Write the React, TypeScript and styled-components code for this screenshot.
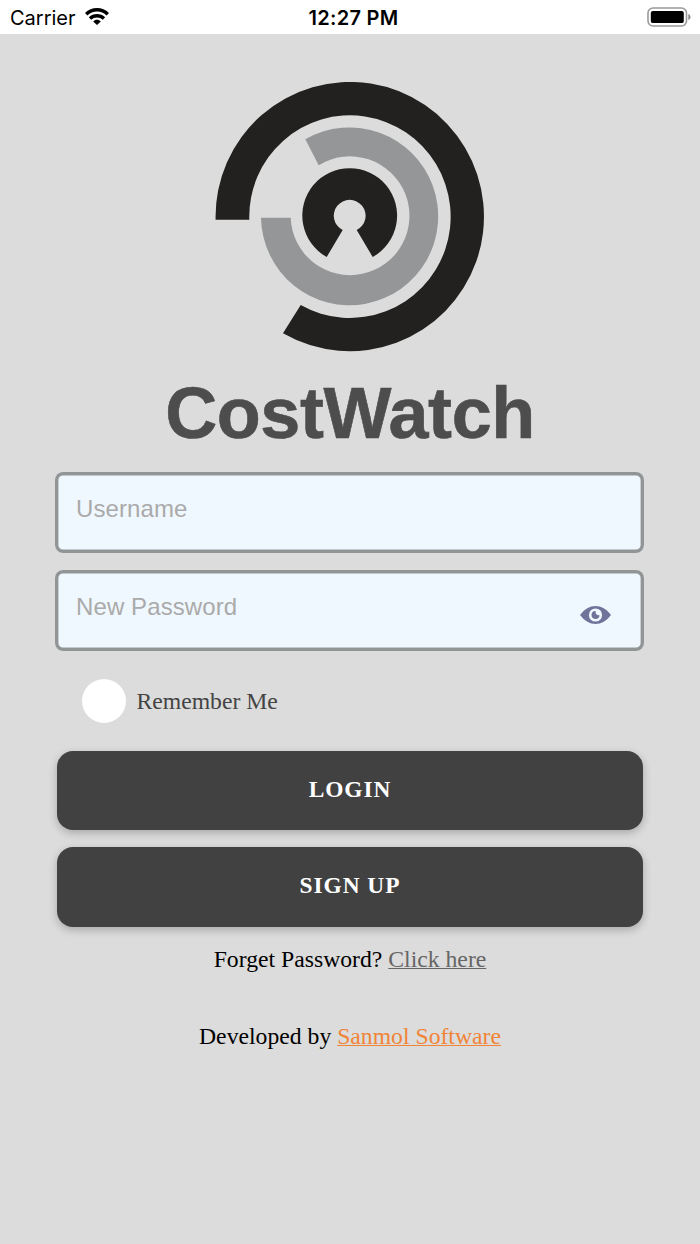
import React from "react";
import styled, { createGlobalStyle } from "styled-components";

const sans = `"Liberation Sans", Arial, sans-serif`;
const serif = `"Liberation Serif", "Times New Roman", serif`;

const GlobalStyle = createGlobalStyle`
  *, *::before, *::after { box-sizing: border-box; }
  body { margin: 0; background: #dcdcdc; }
`;

const Screen = styled.div`
  width: 700px;
  min-height: 1244px;
  display: flex;
  flex-direction: column;
  background: #dcdcdc;
  font-family: ${serif};
`;

const StatusBar = styled.header`
  height: 34px;
  padding: 0 9px 0 10px;
  display: grid;
  grid-template-columns: 1fr auto 1fr;
  align-items: center;
  background: #fff;
  color: #000;
  font-family: Inter, sans-serif;
  font-size: 20px;
`;

const Carrier = styled.div`
  display: flex;
  align-items: center;
  gap: 9px;
`;

const Label = styled.span`
  padding-top: 2px;
  line-height: 32px;
`;

const Clock = styled.time`
  padding-top: 2px;
  padding-left: 6px;
  font-weight: 600;
  line-height: 32px;
  letter-spacing: 0.3px;
`;

const Battery = styled.svg`
  justify-self: end;
  margin-bottom: 1px;
`;

const Main = styled.main`
  padding: 48px 55px 0;
  display: flex;
  flex-direction: column;
  align-items: center;
`;

const Title = styled.h1`
  margin: 21px 0 0;
  height: 80px;
  color: #4d4d4d;
  font: bold 72px/80px ${sans};
  letter-spacing: -0.4px;
  -webkit-text-stroke: 0.6px #4d4d4d;
`;

const Fields = styled.div`
  width: 589px;
  margin: 19px 1px 0 0;
  display: grid;
  gap: 17px;
`;

const Field = styled.label`
  height: 81px;
  padding: 0 33px 0 21px;
  display: flex;
  align-items: center;
  justify-content: space-between;
  border-radius: 8px;
  background: #f0f8ff;
  box-shadow: inset 0 0 0 3.4px #919596;
`;

const Placeholder = styled.span`
  padding-bottom: 8px;
  color: #aaa;
  font: 24px/28px ${sans};
  letter-spacing: 0.1px;
`;

const EyeIcon = styled.svg`
  margin-top: 8px;
`;

const Remember = styled.label`
  align-self: flex-start;
  margin: 28px 0 0 27.4px;
  display: flex;
  align-items: center;
  gap: 10px;
  color: #444;
  font-size: 23.7px;
`;

const Check = styled.span`
  width: 44px;
  height: 44px;
  border-radius: 50%;
  background: #fff;
`;

const Actions = styled.div`
  width: 586px;
  margin-top: 28px;
  display: grid;
  gap: 17px;
`;

const Button = styled.button`
  height: 79.3px;
  padding: 0 0 4px;
  border: 0;
  border-radius: 16px;
  background: #414141;
  color: #fff;
  font: bold 23.4px/28px ${serif};
  letter-spacing: 0.95px;
  box-shadow: 0 3px 8px rgba(0, 0, 0, 0.24);
`;

const Line = styled.p<{ $top: number }>`
  margin: ${(p) => p.$top}px 0 0;
  color: #000;
  font-size: 23.7px;
  line-height: 28px;
`;

const Link = styled.a<{ $color: string }>`
  color: ${(p) => p.$color};
  text-decoration: underline;
  text-decoration-thickness: 1.4px;
  text-decoration-skip-ink: none;
`;

const Logo = () => (
  <svg width="270" height="270" viewBox="215 82 270 270" aria-label="CostWatch logo">
    <path
      fill="#22211f"
      d="M215.6 219.8A134.2 134.6 0 1 1 283 333.3L300.7 305A100.7 101.3 0 1 0 249.3 219.8Z"
    />
    <path
      fill="#949697"
      d="M305.3 139.3A88.6 88.9 0 1 1 261 217.7H290.7A59.4 59.4 0 1 0 318.7 165.3Z"
    />
    <path
      fill="#22211f"
      d="M326.7 257A47.4 47.4 0 1 1 372.7 257L356.7 230A15.9 15.9 0 1 0 342.7 230Z"
    />
  </svg>
);

const Wifi = () => (
  <svg width="24" height="18" viewBox="0 0 24 18" aria-hidden="true">
    <g fill="none" stroke="#000" strokeWidth="3.4">
      <path d="M1.2 6.2C7.2.3 16.8.3 22.8 6.2" />
      <path d="M5 10.5C9 6.8 15 6.8 19 10.5" />
    </g>
    <path d="M12 17 8.2 13.4C10.4 11.3 13.6 11.3 15.8 13.4Z" />
  </svg>
);

const Eye = () => (
  <EyeIcon width="31" height="18" viewBox="0 0 31 18" aria-hidden="true">
    <path fill="#70739a" d="M0 9C9-3 22-3 31 9 22 21 9 21 0 9Z" />
    <circle cx="15.5" cy="9" r="6.6" fill="#f0f8ff" />
    <path fill="#70739a" d="M15.6 5A4 4 0 1 0 19.5 9.2Q15.2 9.6 15.6 5Z" />
  </EyeIcon>
);

export default function App() {
  return (
    <Screen>
      <GlobalStyle />
      <StatusBar>
        <Carrier>
          <Label>Carrier</Label>
          <Wifi />
        </Carrier>
        <Clock>12:27 PM</Clock>
        <Battery width="44" height="20" viewBox="0 0 44 20" aria-label="Battery full">
          <rect x="1" y="1" width="38.5" height="18" rx="5" fill="none" stroke="#999" strokeWidth="1.6" />
          <rect x="3.8" y="3.9" width="33" height="12.2" rx="2.2" />
          <path d="M41.3 6.8Q43.6 8 43.6 10T41.3 13.2Z" fill="#888" />
        </Battery>
      </StatusBar>
      <Main>
        <Logo />
        <Title>CostWatch</Title>
        <Fields>
          <Field>
            <Placeholder>Username</Placeholder>
          </Field>
          <Field>
            <Placeholder>New Password</Placeholder>
            <Eye />
          </Field>
        </Fields>
        <Remember>
          <Check />
          Remember Me
        </Remember>
        <Actions>
          <Button>LOGIN</Button>
          <Button>SIGN UP</Button>
        </Actions>
        <Line $top={18.4}>
          Forget Password? <Link $color="#666">Click here</Link>
        </Line>
        <Line $top={49}>
          Developed by <Link $color="#f08437">Sanmol Software</Link>
        </Line>
      </Main>
    </Screen>
  );
}
